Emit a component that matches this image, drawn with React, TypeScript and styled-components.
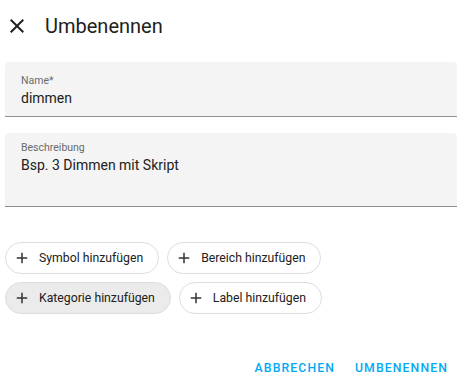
import React from "react";
import styled, { createGlobalStyle } from "styled-components";

const GlobalStyle = createGlobalStyle`
  html, body {
    margin: 0;
    padding: 0;
    background: #ffffff;
    font-family: Roboto, "Noto Sans", sans-serif;
    -webkit-font-smoothing: antialiased;
  }
`;

const chips = [
  ["Symbol hinzufügen", "Bereich hinzufügen"],
  ["Kategorie hinzufügen", "Label hinzufügen"],
];

const App: React.FC = () => {
  return (
    <>
      <GlobalStyle />
      <Dialog>
        <Header>
          <CloseButton aria-label="Schließen">
            <svg viewBox="0 0 24 24" width="24" height="24">
              <path
                fill="currentColor"
                d="M19,6.41L17.59,5L12,10.59L6.41,5L5,6.41L10.59,12L5,17.59L6.41,19L12,13.41L17.59,19L19,17.59L13.41,12L19,6.41Z"
              />
            </svg>
          </CloseButton>
          <Title>Umbenennen</Title>
        </Header>

        <Content>
          <Field $height={55} $top={11.5}>
            <FieldLabel>Name*</FieldLabel>
            <FieldValue>dimmen</FieldValue>
          </Field>
          <Field $height={74} $top={8}>
            <FieldLabel>Beschreibung</FieldLabel>
            <FieldValue>Bsp. 3 Dimmen mit Skript</FieldValue>
          </Field>

          <ChipRows>
            {chips.map((row, i) => (
              <ChipRow key={i}>
                {row.map((label) => (
                  <Chip key={label} $active={label === "Kategorie hinzufügen"}>
                    <svg viewBox="0 0 24 24" width="18" height="18">
                      <path
                        fill="currentColor"
                        d="M19,13H13V19H11V13H5V11H11V5H13V11H19V13Z"
                      />
                    </svg>
                    <span>{label}</span>
                  </Chip>
                ))}
              </ChipRow>
            ))}
          </ChipRows>
        </Content>

        <Actions>
          <TextButton>Abbrechen</TextButton>
          <TextButton>Umbenennen</TextButton>
        </Actions>
      </Dialog>
    </>
  );
};

const Dialog = styled.div`
  width: 459px;
  height: 383px;
  overflow: hidden;
  display: flex;
  flex-direction: column;
`;

const Header = styled.div`
  display: flex;
  align-items: center;
  gap: 16px;
  padding: 14px 0 0 5px;
  height: 24px;
`;

const CloseButton = styled.button`
  border: none;
  background: none;
  padding: 0;
  width: 24px;
  height: 24px;
  color: #212121;
  display: flex;
  align-items: center;
  justify-content: center;
  cursor: pointer;
`;

const Title = styled.h2`
  margin: 0;
  font-size: 20px;
  font-weight: 400;
  line-height: 24px;
  color: #212121;
`;

const Content = styled.div`
  display: flex;
  flex-direction: column;
  gap: 16px;
  padding: 24px 2px 0 5px;
`;

const Field = styled.div<{ $height: number; $top: number }>`
  box-sizing: border-box;
  height: ${(p) => p.$height}px;
  background: #f4f4f4;
  border-radius: 4px 4px 0 0;
  border-bottom: 1px solid #8f8f8f;
  padding: ${(p) => p.$top}px 16px 0 16px;
  display: flex;
  flex-direction: column;
`;

const FieldLabel = styled.div`
  font-size: 10.5px;
  line-height: 14px;
  color: #6b6b6b;
`;

const FieldValue = styled.div`
  font-size: 14px;
  line-height: 20px;
  color: #212121;
`;

const ChipRows = styled.div`
  display: flex;
  flex-direction: column;
  gap: 8px;
  margin-top: 19px;
`;

const ChipRow = styled.div`
  display: flex;
  gap: 8px;
`;

const Chip = styled.button<{ $active: boolean }>`
  box-sizing: border-box;
  height: 32px;
  display: flex;
  align-items: center;
  gap: 8px;
  padding: 0 15px 0 7px;
  border-radius: 16px;
  border: 1px solid #dedede;
  background: ${(p) => (p.$active ? "#ebebeb" : "#ffffff")};
  color: #212121;
  font-family: Roboto, "Noto Sans", sans-serif;
  font-size: 12.25px;
  font-weight: 400;
  cursor: pointer;

  svg {
    color: #333333;
  }
`;

const Actions = styled.div`
  display: flex;
  justify-content: flex-end;
  gap: 4px;
  padding: 0 3px 0 0;
  margin-top: 36px;
`;

const TextButton = styled.button`
  height: 36px;
  padding: 0 8px;
  border: none;
  background: none;
  color: #03a9f4;
  font-family: Roboto, "Noto Sans", sans-serif;
  font-size: 12.25px;
  font-weight: 500;
  letter-spacing: 1.1px;
  text-transform: uppercase;
  cursor: pointer;
`;

export default App;
